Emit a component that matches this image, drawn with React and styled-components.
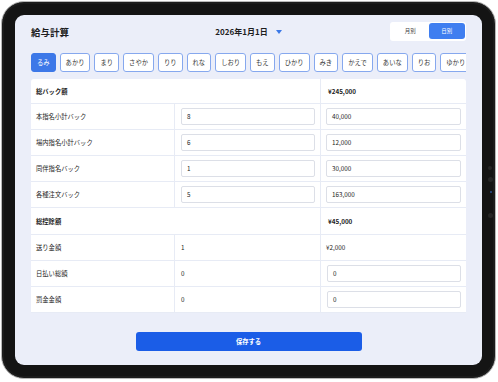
import React from "react";
import styled, { createGlobalStyle } from "styled-components";

const Global = createGlobalStyle`
  html, body { margin: 0; padding: 0; background: #ffffff; }
  body { font-family: "Noto Sans CJK JP", "Noto Sans", sans-serif; color: #222; }
  * { box-sizing: border-box; }
`;

const Stage = styled.div`
  padding: 1px 0 0 1px;
  width: 498px;
  height: 382px;
  overflow: hidden;
`;

const Device = styled.div`
  position: relative;
  width: 495px;
  height: 378px;
  border: 1px solid #b9b9b9;
  border-radius: 23px;
  background: #141414;
  padding: 13px;
  box-shadow: inset 0 0 0 2px #1c1c1c;
`;

const Dot = styled.span`
  position: absolute;
  left: ${(p) => p.$x}px;
  top: ${(p) => p.$y}px;
  width: ${(p) => p.$s}px;
  height: ${(p) => p.$s}px;
  border-radius: 50%;
  background: ${(p) => p.$c};
`;

const Screen = styled.div`
  width: 100%;
  height: 100%;
  background: #ebeef9;
  border-radius: 9px;
  padding: 7px 16px 14px 16px;
  display: flex;
  flex-direction: column;
  overflow: hidden;
`;

const Header = styled.div`
  display: grid;
  grid-template-columns: 1fr auto 1fr;
  align-items: center;
  height: 19px;
`;

const Title = styled.div`
  font-size: 9.5px;
  font-weight: 700;
  color: #1d1d1f;
`;

const DateBox = styled.div`
  display: flex;
  align-items: center;
  gap: 8px;
  font-size: 8px;
  font-weight: 700;
  color: #1d1d1f;
`;

const Caret = styled.span`
  width: 0;
  height: 0;
  border-left: 3px solid transparent;
  border-right: 3px solid transparent;
  border-top: 4px solid #3b78e7;
`;

const Toggle = styled.div`
  justify-self: end;
  width: 76px;
  height: 19px;
  background: #fff;
  border-radius: 3px;
  padding: 1px 1px 2px 2px;
  display: grid;
  grid-template-columns: 1fr 1fr;
`;

const ToggleBtn = styled.div`
  display: flex;
  align-items: center;
  justify-content: center;
  font-size: 5.5px;
  border-radius: 3px;
  color: ${(p) => (p.$active ? "#fff" : "#444")};
  background: ${(p) => (p.$active ? "#3f7ef0" : "transparent")};
`;

const Tabs = styled.div`
  display: flex;
  gap: 4px;
  margin-top: 12px;
  height: 19px;
  overflow: hidden;
  flex-shrink: 0;
`;

const Tab = styled.div`
  flex-shrink: 0;
  height: 19px;
  padding: 0 5px;
  min-width: 24px;
  display: flex;
  align-items: center;
  justify-content: center;
  font-size: 6.3px;
  border-radius: 3px;
  border: 1px solid ${(p) => (p.$active ? "#3d78e8" : "#86a8ee")};
  background: ${(p) => (p.$active ? "#3d78e8" : "#fff")};
  color: ${(p) => (p.$active ? "#fff" : "#333")};
`;

const Card = styled.div`
  margin-top: 7px;
  background: #fff;
  border-radius: 3px 3px 0 0;
  display: grid;
  grid-template-columns: 144px 146px 1fr;
`;

const Cell = styled.div`
  height: ${(p) => p.$h || 26}px;
  grid-column: ${(p) => (p.$span ? "span 2" : "auto")};
  border-bottom: 1px solid #e7ebf5;
  border-right: ${(p) => (p.$last ? "none" : "1px solid #e7ebf5")};
  display: flex;
  align-items: center;
  padding: 0 5px 0 ${(p) => p.$pl ?? 5}px;
  font-size: 6.3px;
  font-weight: ${(p) => (p.$bold ? 700 : 400)};
  color: #222;
`;

const Input = styled.div`
  width: 100%;
  height: 17px;
  border: 1px solid #dcdfe7;
  border-radius: 2px;
  display: flex;
  align-items: center;
  padding-left: 5px;
  font-size: 6.3px;
  color: #222;
  background: #fff;
`;

const Footer = styled.div`
  margin-top: 19px;
  display: flex;
  justify-content: center;
`;

const SaveButton = styled.button`
  width: 226px;
  height: 19px;
  border: none;
  border-radius: 3px;
  background: #1b5de7;
  color: #fff;
  font-family: inherit;
  font-size: 6.3px;
  font-weight: 700;
  padding: 0;
`;

const tabs = ["るみ", "あかり", "まり", "さやか", "りり", "れな", "しおり", "もえ", "ひかり", "みき", "かえで", "あいな", "りお", "ゆかり"];

const inputRows = [
  ["本指名小計バック", "8", "40,000"],
  ["場内指名小計バック", "6", "12,000"],
  ["同伴指名バック", "1", "30,000"],
  ["各種注文バック", "5", "163,000"],
];

export default function App() {
  return (
    <Stage>
      <Global />
      <Device>
        <Dot $x={486} $y={164} $s={4} $c="#262626" />
        <Dot $x={486} $y={175} $s={5} $c="#262626" />
        <Dot $x={488} $y={189} $s={2} $c="#2b4f8f" />
        <Dot $x={486} $y={211} $s={5} $c="#262626" />
        <Screen>
          <Header>
            <Title>給与計算</Title>
            <DateBox>
              2026年1月1日
              <Caret />
            </DateBox>
            <Toggle>
              <ToggleBtn>月別</ToggleBtn>
              <ToggleBtn $active>日別</ToggleBtn>
            </Toggle>
          </Header>
          <Tabs>
            {tabs.map((t, i) => (
              <Tab key={t} $active={i === 0}>{t}</Tab>
            ))}
          </Tabs>
          <Card>
            <Cell $span $bold $h={25}>総バック額</Cell>
            <Cell $last $bold $h={25} $pl={7}>¥245,000</Cell>
            {inputRows.map(([label, count, amount]) => (
              <React.Fragment key={label}>
                <Cell>{label}</Cell>
                <Cell $pl={6}><Input>{count}</Input></Cell>
                <Cell $last><Input>{amount}</Input></Cell>
              </React.Fragment>
            ))}
            <Cell $span $bold $h={27}>総控除額</Cell>
            <Cell $last $bold $h={27} $pl={7}>¥45,000</Cell>
            <Cell>送り金額</Cell>
            <Cell $pl={6}>1</Cell>
            <Cell $last>¥2,000</Cell>
            <Cell>日払い総額</Cell>
            <Cell $pl={6}>0</Cell>
            <Cell $last $pl={6}><Input>0</Input></Cell>
            <Cell>罰金金額</Cell>
            <Cell $pl={6}>0</Cell>
            <Cell $last $pl={6}><Input>0</Input></Cell>
          </Card>
          <Footer>
            <SaveButton>保存する</SaveButton>
          </Footer>
        </Screen>
      </Device>
    </Stage>
  );
}
